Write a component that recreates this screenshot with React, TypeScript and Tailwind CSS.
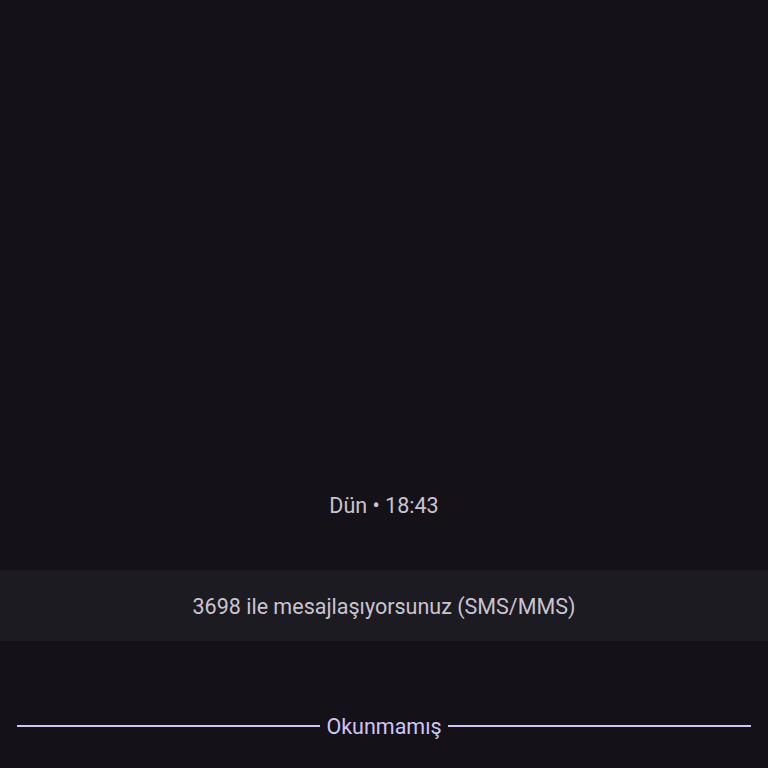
export default function App() {
  return (
    <div className="w-[768px] h-[768px] bg-[#141218] flex flex-col overflow-hidden" style={{ fontFamily: "Roboto, 'Noto Sans', sans-serif" }}>
      <div className="h-[490px]" />
      <div className="h-[30px] pt-[2px] flex items-center justify-center text-[21.5px] text-[#cac4d0]">Dün • 18:43</div>
      <div className="h-[50px]" />
      <div className="h-[71px] pt-[3px] bg-[#1d1b22] flex items-center justify-center text-[21.5px] text-[#cac4d0]">
        3698 ile mesajlaşıyorsunuz (SMS/MMS)
      </div>
      <div className="h-[70px]" />
      <div className="h-[30px] flex items-center px-[17px] gap-[6px]">
        <div className="flex-1 h-[2px] bg-[#d0c4f5]" />
        <span className="text-[21.5px] text-[#d0c4f5] pt-[2px]">Okunmamış</span>
        <div className="flex-1 h-[2px] bg-[#d0c4f5]" />
      </div>
    </div>
  );
}
